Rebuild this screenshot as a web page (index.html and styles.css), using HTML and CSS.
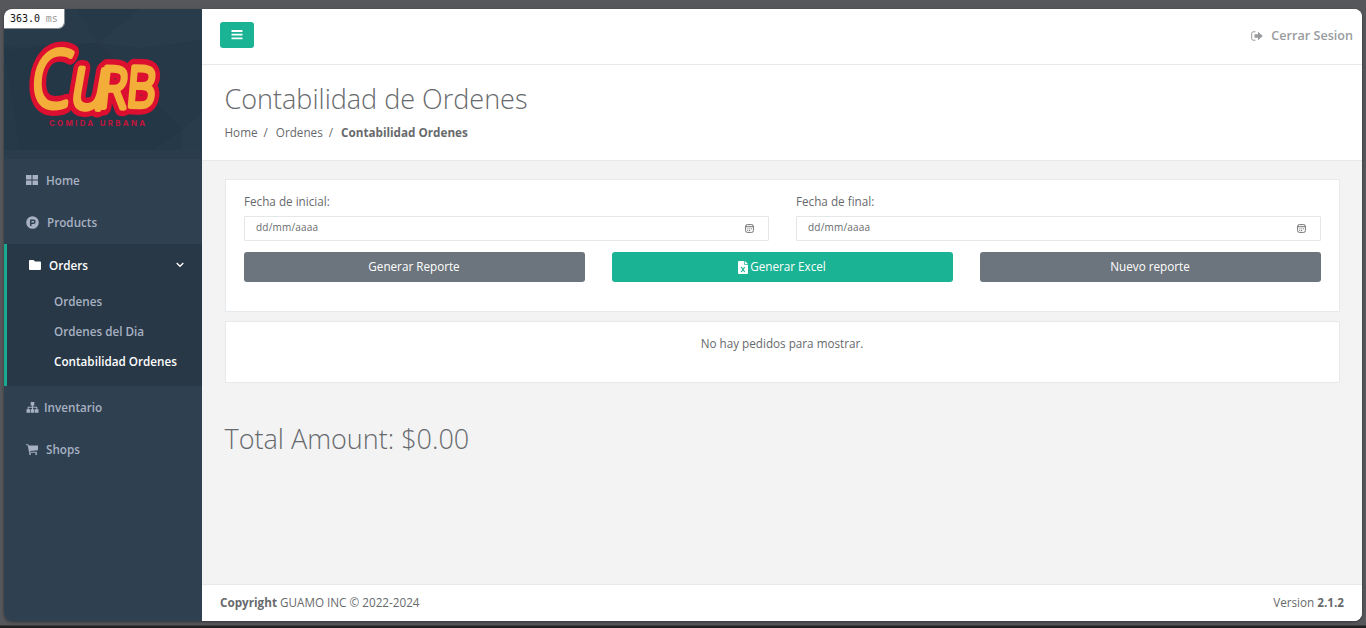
FILE: index.html
```
<!DOCTYPE html>
<html lang="es">
<head>
<meta charset="utf-8">
<title>Contabilidad de Ordenes</title>
<link rel="stylesheet" href="styles.css">
</head>
<body>
<div class="window">
  <aside class="sidebar">
    <div class="brand">
      <svg class="brand-art" viewBox="4 9 198 150" width="198" height="150">
        <path d="M4 9H76L98 43L4 46Z" fill="#273b4a"/>
        <path d="M98 43L140 9H202V40L140 48Z" fill="#283c4b"/>
        <path d="M4 50L98 43L125 70L182 130L140 159L20 150Z" fill="#243747"/>
        <path d="M182 130L202 112V159H180Z" fill="#283c4b"/>
        <path d="M4 150H202V159H4Z" fill="#293d4c"/>
        <defs>
          <g id="wordmark">
            <text transform="translate(29.500 106.500) skewX(-6) scale(.8 1)" font-size="79">C</text>
            <text transform="translate(68.500 107) skewX(-6) rotate(4) scale(.84 1)" font-size="74">u</text>
            <text transform="translate(97.500 107) skewX(-4) rotate(2) scale(.84 1)" font-size="56">R</text>
            <text transform="translate(125.500 106) skewX(-3) rotate(2) scale(.83 1)" font-size="55">B</text>
          </g>
        </defs>
        <use href="#wordmark" class="mark-edge"/>
        <use href="#wordmark" class="mark-face"/>
        <text x="49" y="125.700" class="mark-sub" textLength="96">COMIDA URBANA</text>
      </svg>
      <div class="timer">363.0 <span>ms</span></div>
    </div>
    <nav>
      <a class="item home"><svg width="12" height="10" viewBox="0 0 12 10"><path d="M0 0h5.500v4.500H0zM6.500 0H12v4.500H6.500zM0 5.500h5.500V10H0zM6.500 5.500H12V10H6.500z"/></svg>Home</a>
      <a class="item products"><svg width="13" height="13" viewBox="0 0 13 13"><path fill-rule="evenodd" d="M6.500.2a6.300 6.300 0 1 0 0 12.600a6.300 6.300 0 0 0 0-12.600zM4 3.500h3.500a2.100 2.100 0 0 1 0 4.400H5.500V10H4zM5.500 4.900v1.700h1.900a.8.8 0 0 0 0-1.700z"/></svg>Products</a>
      <div class="group">
        <a class="item orders"><svg width="12" height="10" viewBox="0 0 12 10"><path d="M1 0h3.600l1.400 1.500h5a1 1 0 0 1 1 1V9a1 1 0 0 1-1 1H1a1 1 0 0 1-1-1V1a1 1 0 0 1 1-1z"/></svg>Orders<svg class="chev" width="8" height="6" viewBox="0 0 8 6"><path d="M.7 1L4 4.300L7.300 1"/></svg></a>
        <a class="sub">Ordenes</a>
        <a class="sub">Ordenes del Dia</a>
        <a class="sub on">Contabilidad Ordenes</a>
      </div>
      <a class="item inventory"><svg width="13" height="11" viewBox="0 0 13 11"><path d="M4.700 0h3.600v3.600H7.100v1.200h4.200v2.400h1.200v3.600H8.900V7.200h1.400V5.800H7.100v1.400h1.200v3.600H4.700V7.200h1.200V5.800H2.700v1.400h1.400v3.600H.5V7.200h1.200V4.800h4.200V3.600H4.700z"/></svg>Inventario</a>
      <a class="item shops"><svg width="12" height="11" viewBox="0 0 12 11"><path d="M0 .3h2.300l.4 1.100H12v4.800L3.900 7.100l.1.700h7v.9H3.100L1.700 1.200H0z"/><circle cx="4" cy="9.900" r="1"/><circle cx="10.200" cy="9.900" r="1"/></svg>Shops</a>
    </nav>
  </aside>
  <main>
    <header class="topbar">
      <button class="toggle" aria-label="Menu"><svg width="12" height="10" viewBox="0 0 12 10"><path d="M.5 1h11M.5 4.700h11M.5 8.400h11"/></svg></button>
      <a class="logout"><svg width="12" height="10" viewBox="0 0 12 10"><path d="M4.500.8H2.200A1.500 1.500 0 0 0 .7 2.300v5.400a1.500 1.500 0 0 0 1.500 1.500h2.300" fill="none" stroke="currentColor"/><path d="M3.500 3.300H7V.7L11.800 5L7 9.300V6.700H3.500z"/></svg>Cerrar Sesion</a>
    </header>
    <section class="heading">
      <h2>Contabilidad de Ordenes</h2>
      <div class="crumbs"><span>Home</span><i>/</i><span>Ordenes</span><i>/</i><strong>Contabilidad Ordenes</strong></div>
    </section>
    <section class="content">
      <div class="card form">
        <div class="dates">
          <div><label>Fecha de inicial:</label><div class="date"><span>dd/mm/aaaa</span><svg width="9" height="9" viewBox="0 0 9 9"><rect x=".6" y=".6" width="7.800" height="7.800" rx="1.700"/><path d="M.6 2.700h7.800M2.300 4.800h1M4.100 4.800h1M5.900 4.800h1M2.300 6.500h1M4.100 6.500h1"/></svg></div></div>
          <div><label>Fecha de final:</label><div class="date"><span>dd/mm/aaaa</span><svg width="9" height="9" viewBox="0 0 9 9"><rect x=".6" y=".6" width="7.800" height="7.800" rx="1.700"/><path d="M.6 2.700h7.800M2.300 4.800h1M4.100 4.800h1M5.900 4.800h1M2.300 6.500h1M4.100 6.500h1"/></svg></div></div>
        </div>
        <div class="actions">
          <button>Generar Reporte</button>
          <button class="green"><svg width="10" height="13" viewBox="0 0 10 13"><path fill="#fff" d="M1 0h5.300v3.700H10V12a1 1 0 0 1-1 1H1a1 1 0 0 1-1-1V1a1 1 0 0 1 1-1zM7 0l3 3H7z"/><path d="M3.200 6l3.500 5M6.700 6l-3.500 5" stroke="#1ab394" stroke-width="1.200"/></svg>Generar Excel</button>
          <button>Nuevo reporte</button>
        </div>
      </div>
      <div class="card empty">No hay pedidos para mostrar.</div>
      <h2 class="total">Total Amount: $0.00</h2>
    </section>
    <footer><span><strong>Copyright</strong> GUAMO INC © 2022-2024</span><span class="version">Version <strong>2.1.2</strong></span></footer>
  </main>
</div>
</body>
</html>
```
FILE: styles.css
```
* { box-sizing: border-box; }
body {
  margin: 0;
  height: 628px;
  padding: 9px 4px 7px;
  overflow: hidden;
  background: linear-gradient(#56575b 0 625px, #202020 626px);
  font: 11.7px/16px "Open Sans", sans-serif;
  color: #676a6c;
}
.window {
  display: flex;
  height: 612px;
  border-radius: 8px;
  overflow: hidden;
  box-shadow: 0 1px 3px rgba(0, 0, 0, .4);
}
.sidebar { width: 198px; background: #2f4050; }
.brand { position: relative; height: 150px; background: #263949; }
.brand-art { display: block; }
.brand-art text { font-family: "Open Sans", sans-serif; font-weight: 300; }
.mark-edge { fill: #dc0f30; stroke: #dc0f30; stroke-width: 16.500px; stroke-linejoin: round; }
.mark-face { fill: #f3ae39; stroke: #f3ae39; stroke-width: 5.500px; stroke-linejoin: round; }
.brand-art .mark-sub { font-family: Inter, sans-serif; font-size: 7.800px; font-weight: 700; fill: #c3143a; }
.timer {
  position: absolute;
  left: 0;
  top: 0;
  width: 61px;
  height: 20px;
  padding-left: 6px;
  background: #fff;
  border: solid #858b91;
  border-width: 0 1px 1px 0;
  border-radius: 0 0 7px 0;
  font: 10px/19px "DejaVu Sans Mono", monospace;
  letter-spacing: -.05px;
  color: #111;
  white-space: nowrap;
}
.timer span { color: #999; }
.item { display: flex; align-items: center; height: 43px; padding-left: 22px; line-height: 41px; color: #a7b1c2; font-weight: 600; }
.item svg { fill: currentColor; }
.home { gap: 8px; height: 42px; line-height: 40px; }
.products { gap: 8px; }
.home, .products, .orders, .inventory, .shops { padding-bottom: 1px; }
.group { height: 142px; border-left: 3px solid #19aa8d; background: #293846; }
.orders { gap: 8px; color: #fff; }
.item .chev { margin: 0 18px 0 auto; fill: none; stroke: #fff; stroke-width: 1.300; }
.sub { display: block; height: 30px; padding-left: 47px; line-height: 28px; color: #a7b1c2; font-weight: 600; }
.sub.on { color: #fff; }
.inventory { gap: 5px; }
.shops { gap: 8px; height: 42px; }
main { flex: 1; display: flex; flex-direction: column; background: #f3f3f4; }
.topbar { display: flex; justify-content: space-between; align-items: flex-start; height: 56px; padding: 13px 9px 0 18px; background: #fff; border-bottom: 1px solid #e7eaec; }
button { border: 0; padding: 0; color: #fff; font: inherit; background: #6c757d; border-radius: 3px; }
.toggle { display: flex; align-items: center; justify-content: center; width: 34px; height: 26px; background: #1ab394; }
.toggle svg { stroke: #fff; stroke-width: 1.800; }
.logout { display: flex; align-items: center; gap: 8px; height: 27px; line-height: 19px; color: #999c9e; font-size: 12.600px; font-weight: 600; }
.logout svg { fill: currentColor; }
.heading { height: 96px; padding: 18px 22px 0 22.500px; background: #fff; border-bottom: 1px solid #e7eaec; }
h2 { margin: 0; font-size: 27px; line-height: 32px; font-weight: 300; }
.crumbs { display: flex; margin-top: 9px; }
.crumbs i { font-style: normal; margin: 0 8px 0 6px; }
.content { flex: 1; padding: 18px 22px 0 23px; }
.card { background: #fff; border: 1px solid #e7eaec; }
.form { height: 133px; padding: 13px 18px 0; }
.dates { display: grid; grid-template-columns: 1fr 1fr; gap: 27px; }
label { display: block; margin-bottom: 7px; }
.date { display: flex; align-items: center; justify-content: space-between; height: 25px; padding: 0 14px 0 11px; border: 1px solid #e5e6e7; border-radius: 1px; font-size: 10px; }
.date span { padding-bottom: 3px; letter-spacing: .2px; }
.date svg { fill: none; stroke: #666; stroke-width: .9; }
.actions { display: grid; grid-template-columns: repeat(3, 1fr); gap: 27px; margin-top: 11px; }
.actions button { display: flex; align-items: center; justify-content: center; gap: 2px; height: 30px; padding: 0 1px 2px 0; }
.actions .green { background: #1ab394; }
.actions svg { position: relative; top: 1px; }
.empty { height: 62px; margin-top: 9px; padding: 13px 1px 0 0; text-align: center; }
.total { margin: 40px 0 0 -.5px; }
footer { display: flex; justify-content: space-between; height: 37px; padding: 9px 18px; background: #fff; border-top: 1px solid #e7eaec; }
strong { font-weight: 700; }
```
